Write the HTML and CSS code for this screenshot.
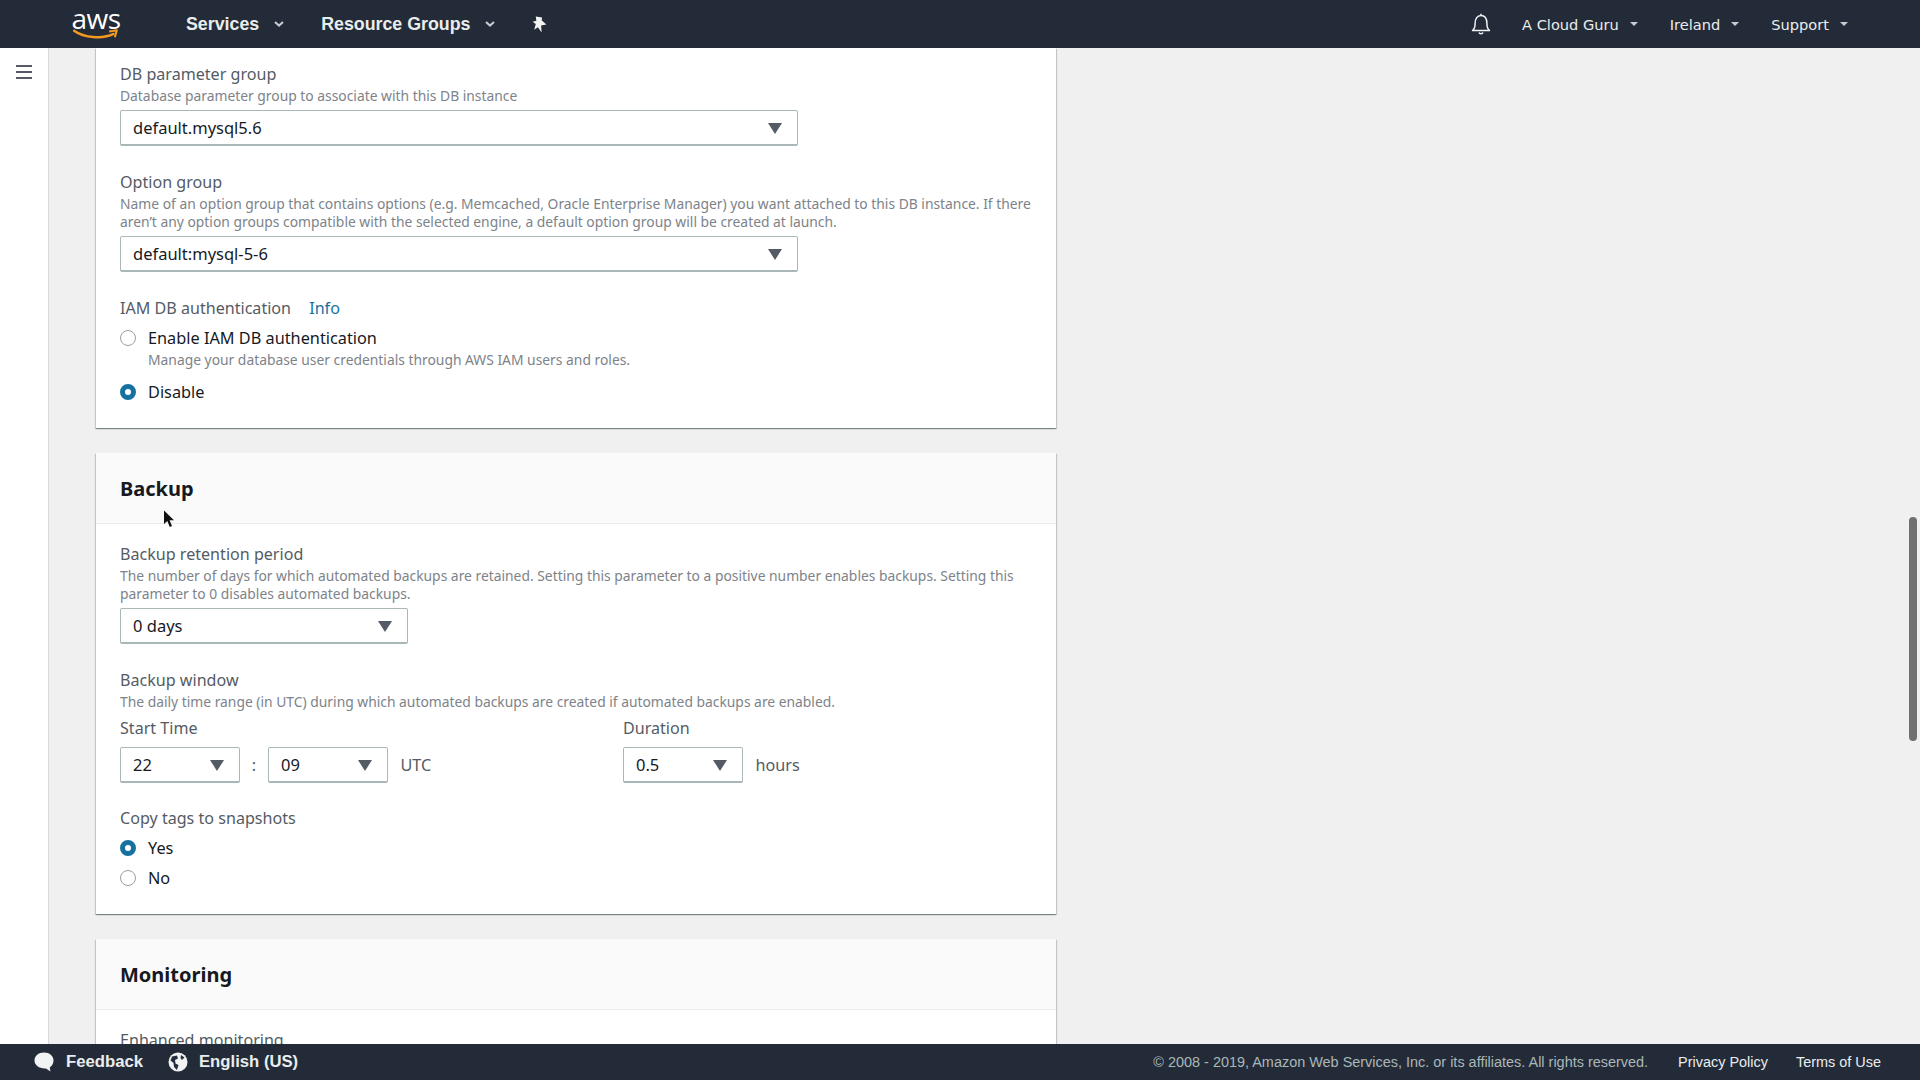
FILE: index.html
```html
<!DOCTYPE html>
<html lang="en">
<head>
    <meta charset="UTF-8">
    <title>Create database - RDS</title>
    <link rel="stylesheet" href="styles.css">
</head>
<body>
    <header class="topbar">
        <div class="logo">
            <span class="logo-text">aws</span>
            <svg class="logo-smile" viewBox="0 0 42 10" width="46" height="11">
                <path d="M1 1.5C10 8 27 9.5 37 4.5" fill="none" stroke="#f49a1f" stroke-width="2.2" stroke-linecap="round"/>
                <path d="M33 2.2L40 1.2L38.2 7.5" fill="none" stroke="#f49a1f" stroke-width="1.9" stroke-linejoin="round"/>
            </svg>
        </div>
        <nav class="nav-left">
            <a class="nav-item">Services<svg class="chev" viewBox="0 0 10 6" width="10" height="6"><path d="M1 1l4 3.6L9 1" fill="none" stroke="#c8ccd1" stroke-width="2"/></svg></a>
            <a class="nav-item">Resource Groups<svg class="chev" viewBox="0 0 10 6" width="10" height="6"><path d="M1 1l4 3.6L9 1" fill="none" stroke="#c8ccd1" stroke-width="2"/></svg></a>
            <svg class="pin" viewBox="0 0 14 16" width="15" height="17"><path d="M3.5 0.5L9.5 1.5L9 4L13.5 8L8.5 9L9 15.5L5.5 10.5L2 13L3.5 7.5L0.5 5.5L4 4.5Z" fill="#f2f3f3"/></svg>
        </nav>
        <nav class="nav-right">
            <svg class="bell" viewBox="0 0 20 22" width="20" height="22"><path d="M1.5 17.5c2-1.5 2.6-3.5 2.6-7C4.100 6 6 2.600 10 2.600s5.900 3.400 5.900 7.900c0 3.500.6 5.500 2.600 7zM8 19.500c.5 1.700 3.500 1.700 4 0" fill="none" stroke="#f2f3f3" stroke-width="1.500" stroke-linejoin="round"/><path d="M10 .8v2" stroke="#f2f3f3" stroke-width="1.500"/></svg>
            <a class="nav-link">A Cloud Guru<span class="caret"></span></a>
            <a class="nav-link">Ireland<span class="caret"></span></a>
            <a class="nav-link">Support<span class="caret"></span></a>
        </nav>
    </header>

    <div class="middle">
        <aside class="sidebar">
            <div class="burger"><span></span><span></span><span></span></div>
        </aside>
        <main class="content">
            <section class="card card-cut">
                <div class="card-body">
                    <div class="field-label">DB parameter group</div>
                    <div class="help">Database parameter group to associate with this DB instance</div>
                    <div class="select select-wide">default.mysql5.6<span class="tri"></span></div>

                    <div class="field-label next">Option group</div>
                    <div class="help">Name of an option group that contains options (e.g. Memcached, Oracle Enterprise Manager) you want attached to this DB instance. If there aren’t any option groups compatible with the selected engine, a default option group will be created at launch.</div>
                    <div class="select select-wide">default:mysql-5-6<span class="tri"></span></div>

                    <div class="field-label next">IAM DB authentication <a class="info">Info</a></div>
                    <div class="radio-row first"><span class="radio"></span><span class="radio-text">Enable IAM DB authentication</span></div>
                    <div class="help radio-help">Manage your database user credentials through AWS IAM users and roles.</div>
                    <div class="radio-row"><span class="radio on"></span><span class="radio-text">Disable</span></div>
                </div>
            </section>

            <section class="card">
                <div class="card-head"><h2>Backup</h2></div>
                <div class="card-body">
                    <div class="field-label">Backup retention period</div>
                    <div class="help">The number of days for which automated backups are retained. Setting this parameter to a positive number enables backups. Setting this parameter to 0 disables automated backups.</div>
                    <div class="select select-mid">0 days<span class="tri"></span></div>

                    <div class="field-label next">Backup window</div>
                    <div class="help">The daily time range (in UTC) during which automated backups are created if automated backups are enabled.</div>
                    <div class="window">
                        <div class="window-col">
                            <div class="field-label">Start Time</div>
                            <div class="window-row">
                                <div class="select select-small">22<span class="tri"></span></div>
                                <span class="sep">:</span>
                                <div class="select select-small">09<span class="tri"></span></div>
                                <span class="unit">UTC</span>
                            </div>
                        </div>
                        <div class="window-col">
                            <div class="field-label">Duration</div>
                            <div class="window-row">
                                <div class="select select-small">0.5<span class="tri"></span></div>
                                <span class="unit">hours</span>
                            </div>
                        </div>
                    </div>

                    <div class="field-label next">Copy tags to snapshots</div>
                    <div class="radio-row first"><span class="radio on"></span><span class="radio-text">Yes</span></div>
                    <div class="radio-row tight"><span class="radio"></span><span class="radio-text">No</span></div>
                </div>
            </section>

            <section class="card">
                <div class="card-head"><h2>Monitoring</h2></div>
                <div class="card-body">
                    <div class="field-label">Enhanced monitoring</div>
                </div>
            </section>
        </main>
    </div>

    <footer class="bottombar">
        <div class="foot-left">
            <svg viewBox="0 0 22 22" width="22" height="22"><path d="M11 1.500c5.500 0 9.500 3.400 9.500 8 0 3.300-1.700 5.700-3.800 6.900l.8 4-4.500-3C7 18 1.500 14.500 1.500 9.500c0-4.600 4-8 9.500-8z" fill="#f2f3f3"/></svg>
            <span class="foot-bold first-label">Feedback</span>
            <svg class="globe" viewBox="0 0 20 20" width="20" height="20"><circle cx="10" cy="10" r="9.500" fill="#f2f3f3"/><path d="M4 4.500L9 3.500L10 6.500L7 8L7.500 11.500L10.500 13L9 18L6 15L5.500 11L2.500 8.500Z" fill="#232f3e"/><path d="M13 3L16.500 5.500L14 8L12.500 6Z" fill="#232f3e"/></svg>
            <span class="foot-bold">English (US)</span>
        </div>
        <div class="foot-right">
            <span class="copy">© 2008 - 2019, Amazon Web Services, Inc. or its affiliates. All rights reserved.</span>
            <a class="foot-link">Privacy Policy</a>
            <a class="foot-link">Terms of Use</a>
        </div>
    </footer>

    <!-- scrollbar and mouse pointer lie over the page -->
    <div class="scroll-thumb"></div>
    <svg class="cursor" viewBox="0 0 12 18" width="12" height="18"><path d="M1 0.500V14L4.300 11L6.800 17L9 16L6.600 10.300H11Z" fill="#111"/></svg>
</body>
</html>
```

FILE: styles.css
```css
* {
    padding: 0;
    margin: 0;
    box-sizing: border-box;
}
body {
    width: 100%;
    height: 100vh;
    display: flex;
    flex-direction: column;
    overflow: hidden;
    background: #f0f0f0;
    font-family: "Noto Sans", "Open Sans", sans-serif;
    color: #16191f;
}

/* barre du haut */
.topbar {
    flex: 0 0 48px;
    height: 48px;
    display: flex;
    align-items: center;
    background: #232b38;
}
.logo {
    width: 46px;
    margin-left: 73px;
    height: 42px;
    display: flex;
    flex-direction: column;
    align-items: center;
}
.logo-text {
    font-family: "Open Sans", sans-serif;
    font-size: 28px;
    line-height: 26px;
    letter-spacing: -0.5px;
    margin-top: 2px;
    color: #fff;
}
.logo-smile {
    margin-top: -2px;
    flex: none;
}
.nav-left {
    display: flex;
    align-items: center;
    margin-left: 67px;
}
.nav-item {
    display: flex;
    align-items: center;
    font-family: "Liberation Sans", sans-serif;
    font-weight: bold;
    font-size: 17.8px;
    color: #eaeded;
    margin-right: 37px;
}
.chev {
    margin-left: 15px;
}
.nav-right {
    margin-left: auto;
    margin-right: 72px;
    display: flex;
    align-items: center;
}
.bell {
    margin-right: 31px;
}
.nav-link {
    display: flex;
    align-items: center;
    font-family: "DejaVu Sans", sans-serif;
    font-size: 14.6px;
    color: #eaeded;
    margin-left: 32px;
}
.bell + .nav-link {
    margin-left: 0;
}
.caret {
    width: 0;
    height: 0;
    margin-left: 11px;
    border-left: 4.5px solid transparent;
    border-right: 4.5px solid transparent;
    border-top: 4.5px solid #c8ccd1;
}

/* partie centrale */
.middle {
    flex: 1;
    min-height: 0;
    display: flex;
}
.sidebar {
    flex: 0 0 49px;
    background: #fff;
    border-right: 1px solid #d5dbdb;
    padding: 17px 0 0 16px;
}
.burger span {
    display: block;
    width: 16px;
    height: 2px;
    margin-bottom: 4px;
    background: #545b64;
}
.content {
    flex: 1;
    overflow: hidden;
    padding-left: 47px;
}

/* cartes */
.card {
    width: 960px;
    margin-bottom: 25px;
    background: #fff;
    box-shadow: 0 1px 1px 0 rgba(0, 28, 36, 0.3), 1px 1px 1px 0 rgba(0, 28, 36, 0.15), -1px 1px 1px 0 rgba(0, 28, 36, 0.15);
}
.card-head {
    height: 71px;
    padding: 0 24px;
    display: flex;
    align-items: center;
    background: #fafafa;
    border-bottom: 1px solid #eaeded;
}
.card-head h2 {
    font-size: 20px;
    font-weight: 700;
    color: #16191f;
}
.card-body {
    padding: 16px 24px 26px;
}
.card-head + .card-body {
    padding-top: 20px;
}
.field-label {
    font-size: 16.1px;
    line-height: 20px;
    color: #545b64;
}
.field-label.next {
    margin-top: 26px;
}
.info {
    margin-left: 14px;
    color: #16719f;
}
.help {
    margin-top: 3px;
    font-size: 13.85px;
    line-height: 18px;
    color: #7d8389;
}

/* listes déroulantes */
.select {
    position: relative;
    height: 36px;
    margin-top: 5px;
    padding-left: 12px;
    display: flex;
    align-items: center;
    font-size: 16.5px;
    color: #16191f;
    background: #fff;
    border: 1px solid #aab7b8;
    border-bottom-width: 2px;
    border-radius: 2px;
}
.select-wide {
    width: 678px;
}
.select-mid {
    width: 288px;
}
.select-small {
    width: 120px;
    margin-top: 0;
}
.tri {
    position: absolute;
    right: 15px;
    top: 12px;
    width: 0;
    height: 0;
    border-left: 7px solid transparent;
    border-right: 7px solid transparent;
    border-top: 11px solid #545b64;
}

/* boutons radio */
.radio-row {
    display: flex;
    align-items: center;
    height: 20px;
    margin-top: 24px;
}
.radio-row.first {
    margin-top: 10px;
}
.radio-row.tight {
    margin-top: 10px;
}
.radio {
    flex: none;
    width: 16px;
    height: 16px;
    margin-right: 12px;
    border: 1px solid #9aa0a3;
    border-radius: 50%;
    background: #fff;
}
.radio.on {
    border: 5px solid #16719f;
}
.radio-text {
    font-size: 16.3px;
    color: #16191f;
}
.radio-help {
    margin: 3px 0 -11px 28px;
}

/* fenêtre de sauvegarde */
.window {
    display: flex;
    margin-top: 7px;
    margin-bottom: -1px;
}
.window-col:first-child {
    width: 503px;
}
.window-row {
    display: flex;
    align-items: center;
    margin-top: 9px;
}
.sep {
    width: 28px;
    text-align: center;
    font-size: 16px;
    color: #545b64;
}
.unit {
    margin-left: 12.5px;
    font-size: 16.2px;
    color: #545b64;
}

/* barre du bas */
.bottombar {
    flex: 0 0 36px;
    height: 36px;
    display: flex;
    align-items: center;
    background: #232b38;
    font-family: "Liberation Sans", sans-serif;
    position: relative;
}
.foot-left {
    display: flex;
    align-items: center;
    margin-left: 33px;
}
.foot-bold {
    font-weight: bold;
    font-size: 16.7px;
    color: #eaeded;
    margin-left: 11px;
}
.first-label {
    margin-right: 25px;
}
.foot-right {
    margin-left: auto;
    margin-right: 39px;
    display: flex;
    align-items: center;
    font-size: 14.45px;
}
.copy {
    color: #aab7b8;
    margin-right: 2px;
}
.foot-link {
    color: #eaeded;
    margin-left: 28px;
}

/* par-dessus la page */
.scroll-thumb {
    position: absolute;
    left: 1909px;
    top: 517px;
    width: 8px;
    height: 224px;
    border-radius: 4px;
    background: #707070;
}
.cursor {
    position: absolute;
    left: 163px;
    top: 510px;
}
```
